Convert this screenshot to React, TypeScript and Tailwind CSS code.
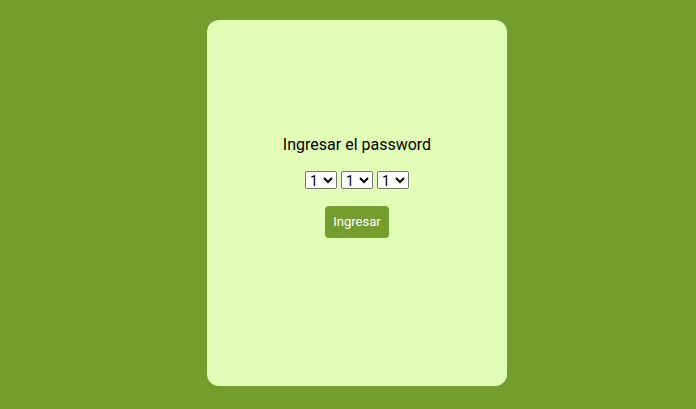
export default function App() {
  return (
    <div className="min-h-[409px] w-full bg-[#739e2e] pt-[20px] font-['Roboto',sans-serif]">
      <div className="ml-[207px] flex h-[366px] w-[300px] flex-col items-center rounded-[12px] bg-[#e1fdb6] pt-[115px]">
        <p className="text-[16px] leading-[19px] text-black">Ingresar el password</p>
        <div className="mt-[17px] flex gap-[4px]">
          {[0, 1, 2].map((i) => (
            <select key={i} className="h-[18px] w-[32px] rounded-[2px] border border-[#767676] bg-white text-[14px] leading-[16px] text-black" defaultValue="1">
              {[1, 2, 3, 4, 5, 6, 7, 8, 9].map((n) => (
                <option key={n} value={String(n)}>{n}</option>
              ))}
            </select>
          ))}
        </div>
        <button className="mt-[17px] h-[32px] w-[64px] rounded-[4px] bg-[#739e2e] text-[13px] text-white">
          Ingresar
        </button>
      </div>
    </div>
  );
}
